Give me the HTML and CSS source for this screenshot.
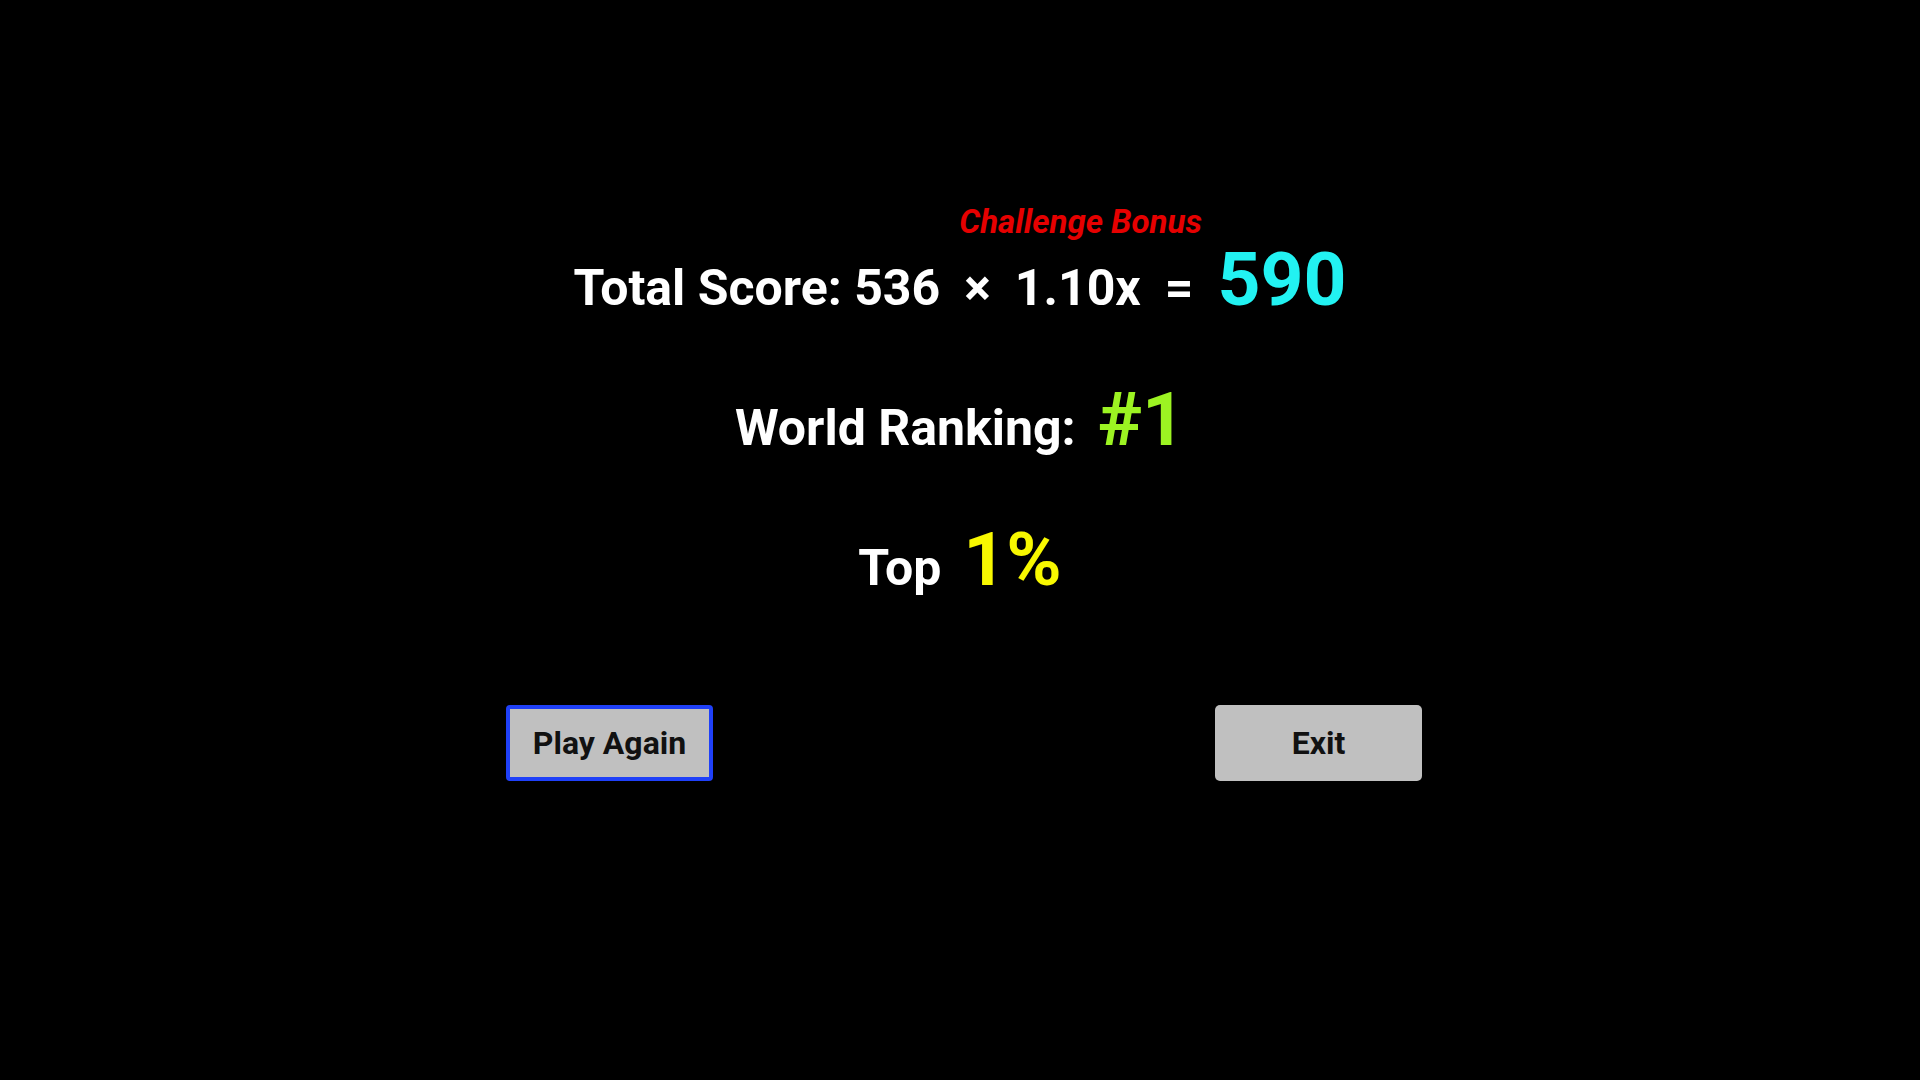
FILE: index.html
```html
<!DOCTYPE html>
<html lang="en">
<head>
<meta charset="utf-8">
<title>Results</title>
<link rel="stylesheet" href="styles.css">
</head>
<body>
<main class="results">
  <div class="row score-row">
    <span class="label">Total Score: 536</span>
    <span class="mult">
      <span class="bonus">Challenge Bonus</span>
      <span class="label">×</span>
    </span>
    <span class="label">1.10x</span>
    <span class="label">=</span>
    <span class="big cyan">590</span>
  </div>
  <div class="row rank-row">
    <span class="label">World Ranking:</span>
    <span class="big green">#1</span>
  </div>
  <div class="row top-row">
    <span class="label">Top</span>
    <span class="big yellow">1%</span>
  </div>
  <div class="buttons">
    <button class="btn btn-focus">Play Again</button>
    <button class="btn">Exit</button>
  </div>
</main>
</body>
</html>
```

FILE: styles.css
```css
html, body {
  margin: 0;
  padding: 0;
  background: #000;
  width: 1920px;
  height: 1080px;
  overflow: hidden;
}

body {
  font-family: Roboto, "Liberation Sans", sans-serif;
  color: #fff;
}

.results {
  display: flex;
  flex-direction: column;
  align-items: center;
  padding-top: 242px;
  gap: 60px;
}

.row {
  display: flex;
  align-items: baseline;
  justify-content: center;
  height: 80px;
}

.label {
  font-size: 50px;
  font-weight: 700;
  line-height: 1;
  color: #fff;
}

.big {
  font-size: 75px;
  font-weight: 700;
  line-height: 1;
}

.score-row {
  gap: 24px;
}

.rank-row {
  gap: 22px;
}

.top-row {
  gap: 22px;
}

.mult {
  position: relative;
  display: inline-flex;
}

.bonus {
  position: absolute;
  left: -5px;
  bottom: calc(100% + 25px);
  white-space: nowrap;
  font-size: 33px;
  font-weight: 700;
  font-style: italic;
  line-height: 1;
  color: #e60000;
}

.cyan { color: #22f2f2; }
.green { color: #9cf322; }
.yellow { color: #f8f800; }

.buttons {
  display: flex;
  justify-content: space-between;
  align-items: center;
  width: 916px;
  padding-left: 8px;
  margin-top: 43px;
}

.btn {
  font-family: Roboto, "Liberation Sans", sans-serif;
  font-size: 32px;
  font-weight: 700;
  color: #111;
  background: #c0c0c0;
  border: none;
  border-radius: 5px;
  width: 207px;
  height: 76px;
  padding: 0;
}

.btn-focus {
  border: 4px solid #1f40f8;
  border-radius: 4px;
}
```
